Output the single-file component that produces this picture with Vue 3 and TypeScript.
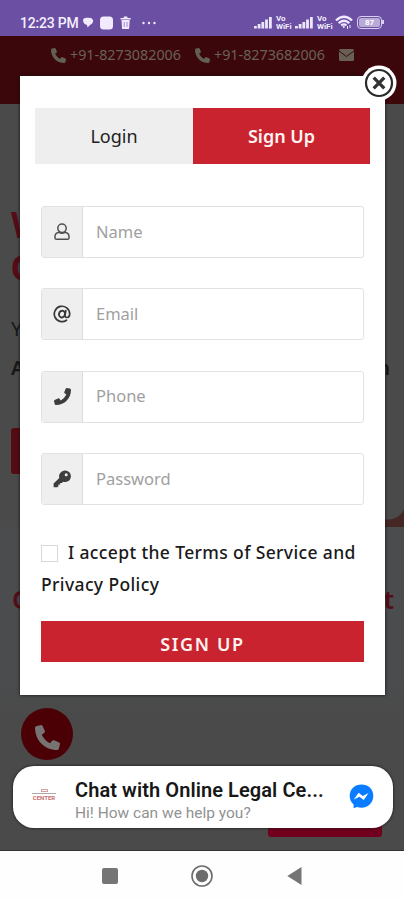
<script setup lang="ts">
import { ref } from 'vue'

interface Field {
  key: string
  label: string
  type: string
}

const fields: Field[] = [
  { key: 'name', label: 'Name', type: 'text' },
  { key: 'email', label: 'Email', type: 'email' },
  { key: 'phone', label: 'Phone', type: 'tel' },
  { key: 'password', label: 'Password', type: 'password' },
]
const values = ref<Record<string, string>>({ name: '', email: '', phone: '', password: '' })
const accepted = ref(false)
const phonePath =
  'M4.2 0.6 L7.2 0 Q7.9 0 8.2 .6 L9.7 4 Q9.9 4.7 9.4 5.2 L7.6 6.6 Q9.4 10.4 13.2 12.4 L14.8 10.6 Q15.3 10.1 16 10.4 L19.4 11.9 Q20 12.2 20 12.9 L19.2 16.2 Q19 17 18.2 17 C9 17 3 10 3 1.7 Q3 .9 4.2 .6Z'
</script>

<template>
  <div class="screen">
    <header class="status">
      <span class="time">12:23 PM</span>
      <svg class="notices" width="80" height="16" viewBox="0 0 80 16" fill="#f1eaff">
        <path d="M1 4.500Q2 2.500 5 2.800Q10 2 11 5Q11.800 8 8 10L5.500 12.500L5 10Q1 9 1 4.500Z" />
        <rect x="18" y="1.500" width="13" height="13" rx="3.500" />
        <path d="M38.500 3h3l.6-1.500h3l.6 1.500h3v1.600H38.500zM39.500 5h8.200l-.6 9h-7z" />
        <path d="M42.200 7v5M45 7v5" stroke="#8a73bb" stroke-width=".8" />
        <circle cx="61.500" cy="8" r="1.200" /><circle cx="67" cy="8" r="1.200" /><circle cx="72.500" cy="8" r="1.200" />
      </svg>
      <div class="signals">
        <template v-for="n in 2" :key="n">
          <svg class="bars" width="19" height="13" viewBox="0 0 19 13" fill="#eee6fb">
            <rect x="0" y="10" width="2.800" height="2.500" /><rect x="3.700" y="8" width="2.800" height="4.500" /><rect x="7.400" y="6" width="2.800" height="6.500" /><rect x="11.100" y="3.500" width="2.800" height="9" /><rect x="15" y="1" width="2.800" height="11.500" />
          </svg>
          <span class="vo"><span>Vo</span><span>WiFi</span></span>
        </template>
        <svg class="wifi" width="18" height="15" viewBox="0 0 18 15" fill="none" stroke="#f1eaff" stroke-width="2.300">
          <path d="M1 5.500Q9-2 17 5.500M3.700 8.200Q9 3.200 14.300 8.200M6.300 10.500Q9 8.300 11.500 10.500" />
          <circle cx="8.800" cy="12" r="1" fill="#f1eaff" stroke="none" />
          <path d="M12.500 11v3M15 10v3" stroke-width="1" />
        </svg>
        <span class="battery"><span class="level">87</span></span>
      </div>
    </header>

    <main class="page">
      <div class="contact">
        <svg width="15" height="15" viewBox="3 0 17 17" fill="#626055"><path :d="phonePath" /></svg>
        <span class="num">+91-8273082006</span>
        <svg width="15" height="15" viewBox="3 0 17 17" fill="#626055"><path :d="phonePath" /></svg>
        <span class="num">+91-8273682006</span>
        <svg class="mail" width="15" height="12" viewBox="0 0 15 12">
          <rect width="15" height="12" rx="1.500" fill="#686055" /><path d="M0 2l7.500 5.500L15 2" fill="none" stroke="#3c070b" stroke-width="1" />
        </svg>
      </div>
      <section class="hero">
        <div class="big">W</div>
        <div class="big">C</div>
        <div class="lead">Y</div>
        <div class="lead strong"><span>A</span><span>n</span></div>
        <div class="cta"></div>
        <div class="picture"></div>
      </section>
      <section class="services">
        <div class="title"><span>O</span><span>t</span></div>
        <div class="call">
          <svg width="25" height="25" viewBox="3 0 17 17" fill="#777372"><path :d="phonePath" /></svg>
        </div>
        <div class="pink"></div>
      </section>
    </main>

    <nav class="nav">
      <span class="square"></span>
      <svg width="22" height="22" viewBox="0 0 22 22"><circle cx="11" cy="11" r="10" fill="none" stroke="#6d6d6d" stroke-width="1.600" /><circle cx="11" cy="11" r="6.200" fill="#6d6d6d" /></svg>
      <svg width="15" height="20" viewBox="0 0 15 20"><path d="M.3 10L14.500 1v18z" fill="#757575" /></svg>
    </nav>

    <div class="modal">
      <div class="tabs">
        <button class="tab" type="button">Login</button>
        <button class="tab active" type="button">Sign Up</button>
      </div>
      <form class="form" @submit.prevent>
        <label v-for="f in fields" :key="f.key" class="field">
          <span class="icon">
            <svg v-if="f.key === 'name'" width="16" height="18" viewBox="0 0 16 18" fill="none" stroke="#505050" stroke-width="1.500">
              <circle cx="8" cy="5.300" r="4.200" /><path d="M4.800 9.300Q1 10.200 1 13.700V15Q1 16.300 2.500 16.300H13.500Q15 16.300 15 15V13.700Q15 10.200 11.200 9.300Q8 11.300 4.800 9.300Z" />
            </svg>
            <svg v-else-if="f.key === 'email'" width="18" height="18" viewBox="0 0 18 18" fill="none" stroke="#383838" stroke-linecap="round">
              <path d="M13.500 15.200A7.700 7.700 0 1 1 16.700 8.800C16.700 11.300 15.500 12.500 13.900 12.500C12.300 12.500 11.800 11.400 12.100 9.900L12.800 5.700" stroke-width="1.700" />
              <ellipse cx="9" cy="9.100" rx="3" ry="3.400" transform="rotate(18 9 9.100)" stroke-width="1.900" />
            </svg>
            <svg v-else-if="f.key === 'phone'" class="flip" width="17" height="17" viewBox="3 0 17 17" fill="#3d3d3d"><path :d="phonePath" /></svg>
            <svg v-else width="18" height="18" viewBox="0 0 18 18">
              <path fill="#3d3d3d" fill-rule="evenodd" d="M11.700.5a5.800 5.800 0 1 1-1.700 11.200L9 12.900H7.200v1.700H5.400v1.700L4.300 17.300H.6v-3.700L6.300 7.900A5.800 5.800 0 0 1 11.700.5zm1.500 2.700a1.500 1.500 0 1 0 0 3 1.500 1.500 0 0 0 0-3z" />
            </svg>
          </span>
          <input v-model="values[f.key]" :type="f.type" :placeholder="f.label" />
        </label>
        <label class="terms"><input v-model="accepted" type="checkbox" />I accept the Terms of Service and<br /><span class="policy">Privacy Policy</span></label>
        <button class="submit" type="submit">SIGN UP</button>
      </form>
      <button class="close" type="button" aria-label="Close">
        <svg width="36" height="36" viewBox="0 0 36 36">
          <circle cx="18" cy="18" r="17.500" fill="#fff" /><circle cx="18" cy="18" r="13" fill="none" stroke="#292929" stroke-width="2.200" /><path d="M12.700 12.700l10.600 10.600M23.300 12.700L12.700 23.300" stroke="#333" stroke-width="3.300" />
        </svg>
      </button>
    </div>

    <aside class="chat">
      <div class="brand"><i></i><b></b><span>CENTER</span></div>
      <div class="copy">
        <div class="headline">Chat with Online Legal Ce...</div>
        <div class="sub">Hi! How can we help you?</div>
      </div>
      <svg class="messenger" width="25" height="25" viewBox="0 0 25 25">
        <path d="M12.500.5C5.800.5.700 5.300.700 11.800c0 3.700 1.400 6.500 3.900 8.600v3.900l3.300-1.200c1.500.4 3 .6 4.600.6 6.700 0 11.800-5 11.800-11.900S19.200.5 12.500.5z" fill="#0a7cff" />
        <path d="M4.800 15.600L9.600 8.700l4.200 3.200 5.800-3-4.900 7-4.200-3.200z" fill="#fff" />
      </svg>
    </aside>
  </div>
</template>

<style>
body {
  margin: 0;
}
</style>

<style scoped>
.screen {
  position: relative;
  display: flex;
  flex-direction: column;
  width: 404px;
  height: 900px;
  overflow: hidden;
  font-family: 'Noto Sans', sans-serif;
}
.screen * {
  box-sizing: border-box;
}
.status {
  display: flex;
  align-items: flex-start;
  height: 36px;
  padding: 15px 20px 0 20px;
  background: #6a4fa3;
  color: #f4eeff;
}
.time {
  width: 61px;
  font: 500 14px/17px Roboto, sans-serif;
  letter-spacing: -0.2px;
  white-space: nowrap;
}
.notices {
  margin-left: 1px;
}
.signals {
  display: flex;
  margin-left: auto;
  align-items: flex-start;
}
.bars {
  margin-top: 1px;
}
.vo {
  display: flex;
  flex-direction: column;
  width: 18px;
  margin: 0 1px 0 3px;
  font: 700 8px/7.500px Roboto, sans-serif;
  white-space: nowrap;
}
.wifi {
  margin-left: -1px;
}
.battery {
  position: relative;
  display: flex;
  width: 25px;
  height: 13px;
  margin: 1px 2px 0 4px;
  padding: 1px;
  border: 1.500px solid #d9cff0;
  border-radius: 4px;
}
.battery::after {
  content: '';
  position: absolute;
  right: -3px;
  top: 3px;
  width: 2px;
  height: 4px;
  background: #d9cff0;
}
.level {
  flex: 1;
  border-radius: 2px;
  background: #b9aad8;
  color: #fff;
  font: 700 8px/9px Roboto, sans-serif;
  text-align: center;
}
.page {
  height: 815px;
  border-bottom: 1px solid #333;
  background: #4a4a4a;
}
.contact {
  display: flex;
  align-items: flex-start;
  height: 68px;
  padding: 12px 0 0 51px;
  background: #3c070b;
}
.num {
  width: 125px;
  margin-left: 4px;
  color: #696158;
  font-size: 14.300px;
  line-height: 14px;
  white-space: nowrap;
}
.mail {
  margin-top: 1px;
}
.hero {
  display: flex;
  flex-direction: column;
  height: 423px;
  padding: 100px 0 0 11px;
}
.big {
  height: 43px;
  color: #560b16;
  font: 700 36px/43px 'Liberation Sans', sans-serif;
}
.lead {
  height: 39px;
  color: #171717;
  font-size: 20px;
  line-height: 39px;
}
.big + .lead {
  margin-top: 19px;
}
.strong {
  display: flex;
  justify-content: space-between;
  padding-right: 14px;
  font-weight: 600;
}
.cta {
  width: 100px;
  height: 46px;
  margin-top: 41px;
  border-radius: 3px;
  background: #540b12;
}
.picture {
  width: 60px;
  height: 22px;
  margin: 31px 0 0 auto;
  background: radial-gradient(circle at 44px -3px, #4a4a4a 17px, #442624 18px);
}
.services {
  height: 323px;
  padding-top: 53px;
  background: linear-gradient(#4a4c4d 150px, #4a4a4a 190px);
}
.title {
  display: flex;
  justify-content: space-between;
  height: 38px;
  padding: 0 10px 0 12px;
  color: #560c18;
  font-size: 26px;
  font-weight: 600;
  line-height: 38px;
}
.call {
  display: flex;
  align-items: center;
  justify-content: center;
  width: 52px;
  height: 52px;
  margin: 90px 0 0 21px;
  padding-top: 7px;
  border-radius: 50%;
  background: #4b0005;
}
.pink {
  width: 114px;
  height: 37px;
  margin: 40px 0 0 268px;
  border-radius: 3px;
  background: #70001d;
}
.nav {
  display: flex;
  align-items: center;
  height: 49px;
  padding-left: 102px;
  background: #fefefe;
}
.square {
  width: 16px;
  height: 16px;
  border-radius: 2px;
  background: #757575;
}
.nav svg:nth-of-type(1) {
  margin-left: 73px;
}
.nav svg:nth-of-type(2) {
  margin-left: 74px;
}
.modal {
  position: absolute;
  left: 20px;
  top: 76px;
  width: 365px;
  height: 619px;
  padding: 32px 15px 0 15px;
  background: #fff;
  box-shadow: 0 0 3px #111;
}
.tabs {
  display: flex;
  height: 56px;
}
.tab {
  width: 158px;
  padding: 0;
  border: 0;
  background: #eee;
  color: #222;
  font: 400 18px/56px 'Noto Sans', sans-serif;
}
.active {
  width: 177px;
  background: #c8232e;
  color: #fff3f2;
  font-weight: 600;
}
.form {
  display: flex;
  flex-direction: column;
  padding: 42px 6px 0 6px;
}
.field {
  display: flex;
  height: 52px;
  margin-bottom: 30.400px;
  border: 1.500px solid #e2e2e2;
  border-radius: 3px;
}
.icon {
  display: flex;
  align-items: center;
  justify-content: center;
  width: 41px;
  border-right: 1px solid #ddd;
  background: #efefef;
}
.flip {
  transform: scaleX(-1);
}
.field input {
  flex: 1;
  min-width: 0;
  padding: 0 0 2px 13px;
  border: 0;
  outline: 0;
  background: transparent;
  font: 400 16.500px 'Noto Sans', sans-serif;
}
.field input::placeholder {
  color: #a0a0a0;
  opacity: 1;
}
.terms {
  height: 85px;
  color: #1a1a1a;
  font-size: 17.500px;
  font-weight: 500;
  letter-spacing: 0.370px;
  line-height: 32px;
  white-space: nowrap;
}
.terms input {
  appearance: none;
  width: 17px;
  height: 17px;
  margin: 0 10px 0 0;
  border: 1px solid #d8d8d8;
  vertical-align: -3px;
}
.submit {
  height: 41px;
  padding: 0;
  border: 0;
  background: #c8232e;
  color: #fff3f2;
  font: 600 18px/46px 'Noto Sans', sans-serif;
  letter-spacing: 1.600px;
}
.close {
  position: absolute;
  right: -12px;
  top: -11px;
  width: 36px;
  height: 36px;
  padding: 0;
  border: 0;
  background: none;
}
.close svg {
  display: block;
}
.chat {
  position: absolute;
  left: 13px;
  top: 766px;
  display: flex;
  width: 380px;
  height: 62px;
  border-radius: 21px;
  background: #fff;
  box-shadow: 0 0 3px #151515;
}
.brand {
  display: flex;
  flex-direction: column;
  align-items: center;
  width: 24px;
  margin: 23px 0 0 19px;
  color: #c96d70;
  font: 700 6px/6px Roboto, sans-serif;
}
.brand i {
  width: 7px;
  height: 3px;
  border: 1px solid #d7a0a0;
}
.brand b {
  width: 24px;
  height: 1px;
  margin: 1px 0;
  background: #aaa;
}
.copy {
  width: 260px;
  margin: 12px 0 0 19px;
  font-family: Roboto, sans-serif;
  white-space: nowrap;
}
.headline {
  color: #171717;
  font-size: 20px;
  font-weight: 600;
  letter-spacing: 0.080px;
  line-height: 24px;
}
.sub {
  color: #929292;
  font-size: 15.500px;
  line-height: 22px;
}
.messenger {
  margin: 18px 0 0 14px;
}
</style>
